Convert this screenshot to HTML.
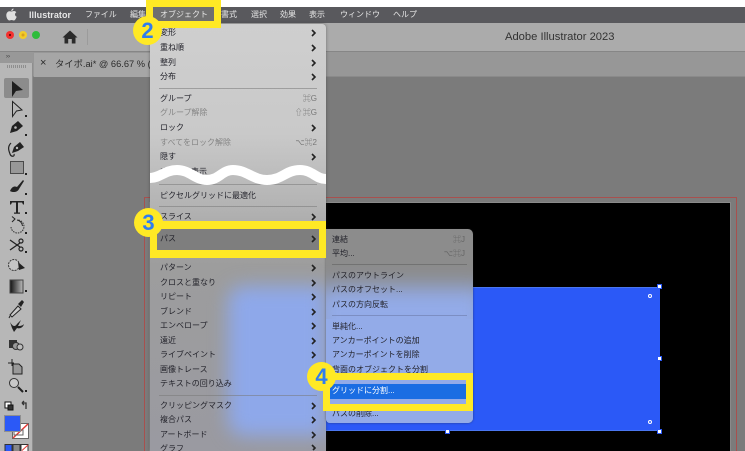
<!DOCTYPE html>
<html lang="ja"><head><meta charset="utf-8"><style>
*{box-sizing:border-box;margin:0;padding:0}
html,body{width:745px;height:451px;overflow:hidden;background:#fff}
body{font-family:"Liberation Sans","Noto Sans CJK JP",sans-serif}
#w{position:relative;width:745px;height:451px;overflow:hidden;contain:strict}
.a{position:absolute}
.t{position:absolute;white-space:nowrap;font-size:8px;line-height:10px;letter-spacing:0;color:#23232b;filter:blur(.2px)}
.m{color:#e6e6e6;top:10px}
.d{color:#858585}
.s{position:absolute;height:1px;background:rgba(120,120,120,.55)}
.sc{position:absolute;white-space:nowrap;font-size:8px;line-height:10px;color:#777;text-align:right;filter:blur(.2px)}
.c{position:absolute;border-radius:50%;background:#ffe925;color:#2f7df0;font-weight:700;font-size:22px;line-height:29px;text-align:center;width:29px;height:29px}
.y{position:absolute;border-style:solid;border-color:#ffe925}
.h{position:absolute;width:5px;height:5px;background:#fff;border:1px solid #2b59f7}
</style></head><body><div id="w">
<!-- menu bar -->
<div class="a" style="left:0;top:7px;width:745px;height:16px;background:#59595d"></div>
<svg class="a" style="left:6px;top:8px" width="11" height="13" viewBox="0 0 11 13"><path fill="#e0e0e0" d="M7.5.5C7.6 1.8 6.5 3 5.3 3 5.2 1.800 6.300.7 7.500.5ZM5.500 3.500C6.200 3.500 7 3 8 3c1 0 1.800.5 2.300 1.200-1.900 1.100-1.600 3.800.4 4.500C10.100 10.300 9 12.500 7.800 12.500c-.8 0-1.200-.5-2.200-.5s-1.500.5-2.200.5C1.900 12.500.3 9.800.3 7.400.3 4.900 1.900 3.300 3.500 3.300c.8 0 1.400.2 2 .2Z"/></svg>
<div class="t m" style="left:29px;font-size:9px;font-weight:700;letter-spacing:.05px">Illustrator</div>
<div class="t m" style="left:85px;letter-spacing:-.1px">ファイル</div>
<div class="t m" style="left:130px">編集</div>
<div class="t m" style="left:221px">書式</div>
<div class="t m" style="left:251px">選択</div>
<div class="t m" style="left:280px">効果</div>
<div class="t m" style="left:309px">表示</div>
<div class="t m" style="left:340px">ウィンドウ</div>
<div class="t m" style="left:393px">ヘルプ</div>
<!-- window chrome -->
<div class="a" style="left:0;top:23px;width:745px;height:29px;background:#ababab;border-bottom:1px solid #868686"></div>
<div class="a" style="left:6px;top:31px;width:8px;height:8px;border-radius:50%;background:#f3312f"><div class="a" style="left:3px;top:3px;width:2px;height:2px;background:#6a1010"></div></div>
<div class="a" style="left:19px;top:31px;width:8px;height:8px;border-radius:50%;background:radial-gradient(circle,#d9a020 0 1px,#f2cc2a 2px)"></div>
<div class="a" style="left:32px;top:31px;width:8px;height:8px;border-radius:50%;background:#2fbc3c"></div>
<svg class="a" style="left:62px;top:30px" width="16" height="14" viewBox="0 0 16 14"><path fill="#2b2b2b" d="M8 .5 15.500 7.500H13.500V13.500H9.800V9H6.200V13.500H2.500V7.500H.5Z"/></svg>
<div class="a" style="left:87px;top:29px;width:1px;height:16px;background:#9b9b9b"></div>
<div class="t" style="left:505px;top:31px;font-size:11.200px;line-height:13px;color:#333">Adobe Illustrator 2023</div>
<!-- tab bar -->
<div class="a" style="left:0;top:52px;width:745px;height:25px;background:#979797;border-bottom:1px solid #8a8a8a"></div>
<div class="a" style="left:34px;top:53px;width:116px;height:24px;background:#a6a6a6"></div>
<div class="t" style="left:40px;top:58px;font-size:11px;color:#2a2a2a">×</div>
<div class="t" style="left:55px;top:59px;font-size:9.300px;color:#2c2c2c">タイポ.ai* @ 66.67 % (</div>
<!-- canvas -->
<div class="a" style="left:33px;top:77px;width:712px;height:374px;background:#7b7b7b"></div>
<div class="a" style="left:144px;top:197px;width:593px;height:254px;border:1px solid #a8504e;border-bottom:0"></div>
<div class="a" style="left:150px;top:203px;width:580px;height:248px;background:#000;box-shadow:0 0 0 1px #8a8a8a"></div>
<div class="a" style="left:235px;top:287px;width:425px;height:144px;background:#2b59f7;border-top:1px solid #4a76f0;border-bottom:1px solid #4a76f0"></div>
<div class="h" style="left:657px;top:284px"></div>
<div class="h" style="left:657px;top:356px"></div>
<div class="h" style="left:657px;top:429px"></div>
<div class="h" style="left:445px;top:429px"></div>
<div class="a" style="left:648px;top:294px;width:4px;height:4px;border:1px solid #fff;border-radius:50%"></div>
<div class="a" style="left:648px;top:420px;width:4px;height:4px;border:1px solid #fff;border-radius:50%"></div>
<!-- toolbar -->
<div class="a" style="left:0;top:52px;width:33px;height:399px;background:#b7b7b7;border-right:1px solid #8e8e8e"></div>
<div class="a" style="left:0;top:52px;width:33px;height:11px;background:#989898"></div>
<div class="t" style="left:6px;top:52px;font-size:6px;color:#333">››</div>
<div class="a" style="left:7px;top:65px;width:19px;height:3px;background:repeating-linear-gradient(90deg,#8e8e8e 0 1px,transparent 1px 2px)"></div>
<div class="a" style="left:4px;top:78px;width:25px;height:20px;background:#8c8c8c;border-radius:2px"></div>
<svg class="a" style="left:0;top:78px" width="33" height="373" viewBox="0 78 33 373">
<path fill="#1f1f1f" d="M12 81 L23 90 L16 91 L12 97Z"/>
<path fill="none" stroke="#222" d="M12.500 101.500 L22 110 L16.500 111 L12.500 116.500Z"/>
<path fill="#222" d="M25 115h2v2h-2zM25 134h2v2h-2zM25 173h2v2h-2zM25 193h2v2h-2zM25 212h2v2h-2zM25 232h2v2h-2zM25 251h2v2h-2zM25 290h2v2h-2zM25 390h2v2h-2z"/>
<path fill="#222" d="M10 133 L12 126 L18 121 L23 126 L17 131 Z"/><circle cx="15.500" cy="127.500" r="1.300" fill="#bbb"/>
<path fill="#222" d="M12 153 L14 147 L20 142 L24 147 L18 151 Z"/><circle cx="17" cy="148" r="1.200" fill="#bbb"/>
<path fill="none" stroke="#222" stroke-width="1.200" d="M11 143 C7 147 9 151 10 154 C11 157 15 157 14 154"/>
<rect x="10.500" y="161.500" width="13" height="12" fill="#989898" stroke="#4a4a4a"/>
<path fill="#222" d="M10 191 C12 186 15 186 17 187 L23 180 L24 181 L19 189 C18 192 13 193 10 191Z"/>
<path fill="#222" d="M10 201h14v3.500h-1l-1-2H18v10h2v1.200h-6v-1.200h2v-10h-4l-1 2H10Z"/>
<path fill="none" stroke="#333" stroke-dasharray="1.500 1" d="M11 227a6.500 6.500 0 1 0 6-7"/>
<path fill="none" stroke="#222" d="M17 220 a6.500 6.500 0 0 1 5.500 6M12 222l3-3-3-2.500"/>
<path fill="none" stroke="#222" stroke-width="1.300" d="M10 240 L20 247M10 250 L20 243"/><circle cx="21" cy="241" r="2" fill="none" stroke="#222" stroke-width="1.200"/><circle cx="21" cy="249" r="2" fill="none" stroke="#222" stroke-width="1.200"/>
<circle cx="14" cy="265" r="5.500" fill="#c4c4c4" stroke="#333" stroke-dasharray="2 1"/><path fill="#222" d="M18 262 L25 268 L19 270Z"/>
<defs><linearGradient id="g"><stop offset="0" stop-color="#111"/><stop offset="1" stop-color="#bbb"/></linearGradient></defs>
<rect x="10" y="280" width="13" height="13" fill="url(#g)" stroke="#444"/>
<g transform="translate(0,-6)"><path fill="#c8c8c8" stroke="#222" d="M10 321 L18 312 L21 315 L12 323ZM10 322 L9 324"/><path fill="#222" d="M18 310 L22 306 L24 308 L21 313 Z"/></g>
<path fill="#222" d="M10 322 C13 327 15 327 17 324 L21 320 L18 326 C22 326 23 325 24 324 C23 328 19 329 17 328 L14 332 L12 328Z"/>
<rect x="9" y="340" width="8" height="8" fill="#333"/><circle cx="16" cy="346" r="3.500" fill="#999" stroke="#333"/><circle cx="20" cy="347" r="3" fill="#bbb" stroke="#333"/>
<path fill="none" stroke="#222" d="M8 363h6M12 359v7"/><path fill="#999" stroke="#222" d="M13 364h6l3 3v7h-9Z"/>
<circle cx="14" cy="383" r="4.500" fill="#c8c8c8" stroke="#333"/><path stroke="#222" stroke-width="2" d="M18 387 L23 392"/>
<rect x="5" y="402" width="6" height="6" fill="#fff" stroke="#111"/><rect x="8" y="405" width="5" height="5" fill="#333" stroke="#111"/>
<path fill="none" stroke="#333" stroke-width="1.300" d="M22 403h4v6M22 403l2-2M22 403l2 2"/>
<rect x="12.500" y="423.500" width="16" height="15" fill="#fff" stroke="#666"/>
<path stroke="#e53935" stroke-width="1.500" d="M13 438 L28 424"/>
<rect x="14" y="430" width="9" height="5" fill="none" stroke="#666"/>
<rect x="4.500" y="415.500" width="16" height="16" fill="#2b59f7" stroke="#8f8f8f"/>
<path fill="#2b59f7" stroke="#333" d="M5 451V444.500H12V451"/><path fill="#888" stroke="#333" d="M13 451V444.500H20V451"/><path fill="#fff" stroke="#333" d="M21 451V444.500H28V451"/><path stroke="#e53935" d="M22 450.500 L28 445"/>
</svg>
<!-- object menu -->
<div class="a" style="left:150px;top:24px;width:176px;height:427px;overflow:hidden;border-radius:4px 4px 0 0;background:linear-gradient(180deg,#cfcfcf 0,#c9c9c9 110px,#b4b4b4 180px,#9d9d9d 240px,#9a9aa1 427px);box-shadow:0 0 3px rgba(40,40,40,.45)">
<div class="a" style="left:78px;top:262px;width:98px;height:150px;border-radius:16px 0 0 16px;background:#8ea8ea;filter:blur(9px)"></div>
</div>
<div class="a" style="left:157px;top:229px;width:162px;height:21px;background:#7e7e7e"></div>
<div class="t" style="left:160px;top:28px">変形</div>
<div class="t" style="left:160px;top:43px">重ね順</div>
<div class="t" style="left:160px;top:58px">整列</div>
<div class="t" style="left:160px;top:72px">分布</div>
<div class="s" style="left:159px;top:88px;width:158px"></div>
<div class="t" style="left:160px;top:94px">グループ</div>
<div class="t d" style="left:160px;top:108px">グループ解除</div>
<div class="t" style="left:160px;top:123px">ロック</div>
<div class="t d" style="left:160px;top:138px">すべてをロック解除</div>
<div class="t" style="left:160px;top:152px">隠す</div>
<div class="t" style="left:160px;top:167px">すべてを表示</div>
<div class="s" style="left:159px;top:184px;width:158px"></div>
<div class="t" style="left:160px;top:191px">ピクセルグリッドに最適化</div>
<div class="s" style="left:159px;top:206px;width:158px"></div>
<div class="t" style="left:160px;top:212px">スライス</div>
<div class="t" style="left:160px;top:234px">パス</div>
<div class="t" style="left:160px;top:263px">パターン</div>
<div class="t" style="left:160px;top:278px">クロスと重なり</div>
<div class="t" style="left:160px;top:292px">リピート</div>
<div class="t" style="left:160px;top:307px">ブレンド</div>
<div class="t" style="left:160px;top:321px">エンベロープ</div>
<div class="t" style="left:160px;top:336px">遠近</div>
<div class="t" style="left:160px;top:350px">ライブペイント</div>
<div class="t" style="left:160px;top:365px">画像トレース</div>
<div class="t" style="left:160px;top:379px">テキストの回り込み</div>
<div class="s" style="left:159px;top:395px;width:158px"></div>
<div class="t" style="left:160px;top:401px">クリッピングマスク</div>
<div class="t" style="left:160px;top:415px">複合パス</div>
<div class="t" style="left:160px;top:430px">アートボード</div>
<div class="t" style="left:160px;top:444px;height:7px;overflow:hidden">グラフ</div>
<div class="sc" style="left:277px;width:40px;top:94px">⌘G</div>
<div class="sc" style="left:277px;width:40px;top:108px">⇧⌘G</div>
<div class="sc" style="left:277px;width:40px;top:138px">⌥⌘2</div>
<svg class="a" style="left:150px;top:24px" width="176" height="427" viewBox="150 24 176 427"><g fill="none" stroke="#222" stroke-width="1.600">
<path d="M312 30l3 3-3 3M312 45l3 3-3 3M312 60l3 3-3 3M312 74l3 3-3 3M312 125l3 3-3 3M312 154l3 3-3 3M312 214l3 3-3 3M312 236l3 3-3 3M312 265l3 3-3 3M312 280l3 3-3 3M312 294l3 3-3 3M312 309l3 3-3 3M312 323l3 3-3 3M312 338l3 3-3 3M312 352l3 3-3 3M312 403l3 3-3 3M312 417l3 3-3 3M312 432l3 3-3 3M312 445l3 3-2 2"/></g>
<path fill="none" stroke="#fff" stroke-width="10" d="M150 178 C160 178 165 170 177 170 C190 170 195 180 207 180 C219 180 222 170 233 170 C247 170 253 180 267 180 C282 180 286 170 300 170 C312 170 316 179 326 179"/>
</svg>
<!-- path submenu -->
<div class="a" style="left:326px;top:229px;width:147px;height:194px;overflow:hidden;border-radius:0 5px 5px 4px;background:#8c8c8c;box-shadow:0 0 2px rgba(30,30,30,.5)">
<div class="a" style="left:-10px;top:58px;width:170px;height:136px;background:#93abe8;filter:blur(10px)"></div>
<div class="a" style="left:0;top:90px;width:147px;height:104px;background:#93abe8"></div>
</div>
<div class="t" style="left:332px;top:235px">連結</div>
<div class="t" style="left:332px;top:249px">平均...</div>
<div class="s" style="left:332px;top:264px;width:135px;background:rgba(90,90,90,.5)"></div>
<div class="t" style="left:332px;top:271px">パスのアウトライン</div>
<div class="t" style="left:332px;top:285px">パスのオフセット...</div>
<div class="t" style="left:332px;top:300px">パスの方向反転</div>
<div class="s" style="left:332px;top:315px;width:135px;background:rgba(90,100,140,.4)"></div>
<div class="t" style="left:332px;top:322px">単純化...</div>
<div class="t" style="left:332px;top:336px">アンカーポイントの追加</div>
<div class="t" style="left:332px;top:350px">アンカーポイントを削除</div>
<div class="t" style="left:332px;top:365px">背面のオブジェクトを分割</div>
<div class="a" style="left:330px;top:384px;width:136px;height:15px;background:#1a6de3"></div>
<div class="t" style="left:332px;top:386px;color:#fff">グリッドに分割...</div>
<div class="t" style="left:332px;top:409px">パスの削除...</div>
<div class="sc" style="left:425px;width:40px;top:235px;color:#666">⌘J</div>
<div class="sc" style="left:425px;width:40px;top:249px;color:#666">⌥⌘J</div>
<!-- selection of top menu -->
<div class="a" style="left:153px;top:7px;width:61px;height:14px;background:#6f6f6f"></div>
<div class="t m" style="left:160px">オブジェクト</div>
<!-- yellow annotations -->
<div class="y" style="left:146px;top:0;width:75px;height:28px;border-width:7px"></div>
<div class="y" style="left:150px;top:221px;width:176px;height:37px;border-width:8px 7px"></div>
<div class="y" style="left:323px;top:373px;width:150px;height:38px;border-width:7px"></div>
<div class="c" style="left:133px;top:16px">2</div>
<div class="c" style="left:134px;top:208px">3</div>
<div class="c" style="left:307px;top:362px">4</div>
</div></body></html>
